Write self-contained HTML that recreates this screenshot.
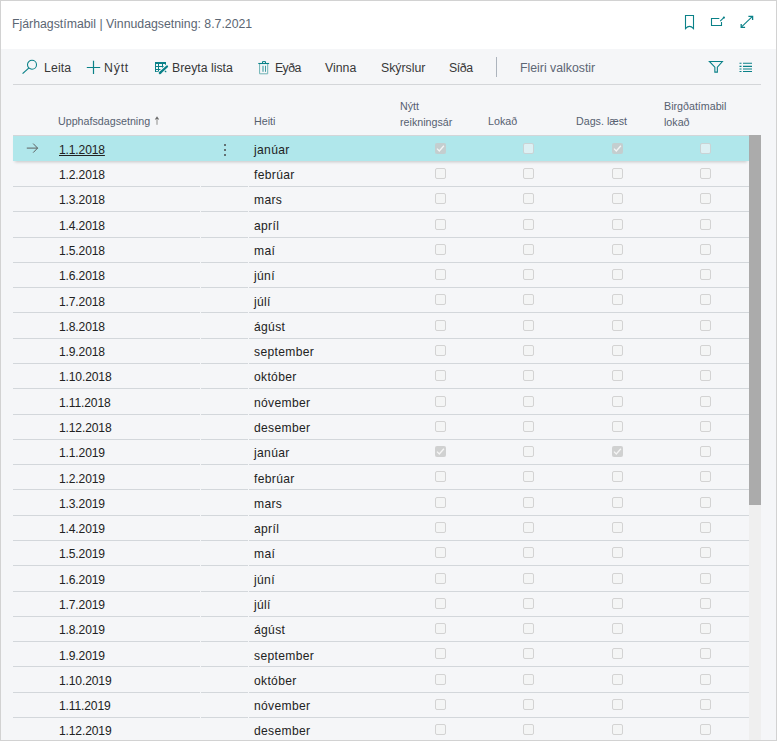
<!DOCTYPE html>
<html><head><meta charset="utf-8"><style>
*{margin:0;padding:0;box-sizing:border-box}
html,body{width:777px;height:741px;overflow:hidden;background:#f5f6f8}
body{position:relative;font-family:"Liberation Sans",sans-serif;}
.frame{position:absolute;left:0;top:0;width:777px;height:741px;border:1px solid #d2d2d2;pointer-events:none;z-index:50}
.hdr{position:absolute;left:0;top:0;width:777px;height:49px;background:#fff}
.title{position:absolute;left:12px;top:16px;font-size:12.3px;color:#5b6673;white-space:nowrap;line-height:16px}
.tb{position:absolute;top:60px;font-size:12.3px;color:#383838;white-space:nowrap;line-height:16px}
.tbline{position:absolute;left:13px;top:84px;width:748px;height:1px;background:#d4d6d9}
.sep{position:absolute;left:496px;top:57px;width:1px;height:20px;background:#adb4bd}
.hd{position:absolute;font-size:10.7px;color:#556070;white-space:nowrap;line-height:15.5px}
.cell{position:absolute;font-size:12.1px;color:#222;white-space:nowrap;line-height:16px}
.ul{text-decoration:underline}
.nm{letter-spacing:0.33px}
.dt{letter-spacing:-0.15px}
.rl{position:absolute;height:1px;background:#d3d7db}
.selrow{position:absolute;left:13px;width:736px;background:#b0e7eb;border-top:1px solid #d3d6d9;box-shadow:0 3px 3px -2px rgba(0,0,0,0.2)}
.cb{position:absolute;width:11px;height:11px;border:1px solid #d3d3d3;border-radius:2px;background:#f4f5f5}
.selcb{background:#ddf0f3;border-color:#c9d3d5}
.chk{background:rgba(200,200,200,0.82);border-color:transparent}
.chk svg{position:absolute;left:-1px;top:-1px}
.dot{position:absolute;width:2px;height:2px;background:#4a4a4a;border-radius:1px}
.sbtrack{position:absolute;left:749px;top:135px;width:12px;height:606px;background:#efefef}
.sbthumb{position:absolute;left:749px;top:135px;width:12px;height:370px;background:#ababab}
</style></head><body>
<div class="hdr"></div>
<div class="title">Fjárhagstímabil | Vinnudagsetning: 8.7.2021</div>
<svg style="position:absolute;left:684px;top:14px" width="11" height="16" viewBox="0 0 11 16"><path d="M1.5 1.5 H9.5 V14.6 Q5.5 10.2 1.5 14.6 Z" stroke="#0a8188" stroke-width="1.1" fill="none"/></svg>
<svg style="position:absolute;left:710px;top:16px" width="16" height="12" viewBox="0 0 16 12"><path d="M9.3 2.5 H1.5 V9.5 H11.5 V5.9" stroke="#0a8188" stroke-width="1.1" fill="none"/><path d="M10.2 5.1 L13.8 1.6" stroke="#0a8188" stroke-width="1.1" fill="none"/><circle cx="13.9" cy="1.6" r="1.1" fill="#0a8188"/></svg>
<svg style="position:absolute;left:739px;top:15px" width="16" height="15" viewBox="0 0 16 15"><path d="M2.6 11.9 L13.2 1.7" stroke="#0a8188" stroke-width="1.1" fill="none"/><path d="M9.4 1.3 H13.6 V5" stroke="#0a8188" stroke-width="1.3" fill="none"/><path d="M2.2 9.1 V12.3 H6.1" stroke="#0a8188" stroke-width="1.3" fill="none"/></svg>

<svg style="position:absolute;left:21px;top:58px" width="18" height="17" viewBox="0 0 18 17"><circle cx="11" cy="6.8" r="4.5" stroke="#0a8188" stroke-width="1.05" fill="none"/><path d="M7.7 10.1 L1.6 15.6" stroke="#0a8188" stroke-width="1.2" fill="none"/></svg>
<div class="tb" style="left:44px;letter-spacing:0.1px">Leita</div>
<svg style="position:absolute;left:86px;top:60px" width="15" height="15" viewBox="0 0 15 15"><path d="M7.5 0.8 V14 M0.8 7.5 H14.2" stroke="#0a8188" stroke-width="1.2" fill="none"/></svg>
<div class="tb" style="left:104px;letter-spacing:0.8px">Nýtt</div>
<svg style="position:absolute;left:152px;top:59px" width="18" height="18" viewBox="0 0 18 18"><rect x="3" y="3" width="11" height="10" fill="#0a8188"/><g fill="#f5f6f8"><rect x="4" y="5" width="2" height="2"/><rect x="7" y="5" width="3" height="2"/><rect x="11" y="5" width="2" height="2"/><rect x="4" y="8" width="2" height="2"/><rect x="7" y="8" width="3" height="2"/><rect x="11" y="8" width="2" height="2"/><rect x="4" y="11" width="2" height="1.2"/><rect x="7" y="11" width="3" height="1.2"/><rect x="11" y="11" width="2" height="1.2"/></g><path d="M7.8 14.1 L15.2 7.2" stroke="#f5f6f8" stroke-width="4.4" fill="none"/><path d="M8.3 13.7 L15 7.5" stroke="#0a8188" stroke-width="2.3" stroke-linecap="round" fill="none"/><path d="M7.2 14.8 L8.8 13.2" stroke="#0a8188" stroke-width="2" fill="none"/><rect x="13" y="12" width="1.3" height="1.2" fill="#0a8188"/></svg>
<div class="tb" style="left:172px">Breyta lista</div>
<svg style="position:absolute;left:254px;top:58px" width="20" height="20" viewBox="0 0 20 20"><path d="M4.3 5.5 H15.1" stroke="#0a8188" stroke-width="1.1" fill="none"/><path d="M8.5 5 V3.6 H11.5 V5" stroke="#0a8188" stroke-width="1" fill="none"/><path d="M5.6 6 V15.8 H13.7 V6" stroke="#6fb3b6" stroke-width="1" fill="none"/><rect x="8" y="7.8" width="2" height="6" fill="#8ec4c7"/><rect x="11" y="7.8" width="1" height="6" fill="#3f9aa0"/></svg>
<div class="tb" style="left:275px;letter-spacing:-0.6px">Eyða</div>
<div class="tb" style="left:325px">Vinna</div>
<div class="tb" style="left:381px">Skýrslur</div>
<div class="tb" style="left:449px;letter-spacing:-0.4px">Síða</div>
<div class="sep"></div>
<div class="tb" style="left:520px;color:#5d6775">Fleiri valkostir</div>
<svg style="position:absolute;left:708px;top:60px" width="16" height="14" viewBox="0 0 16 14"><path d="M1.4 1.5 H14.4 L9.35 7.2 V12.15 H6.85 V7.2 Z" stroke="#0a8188" stroke-width="1.1" fill="none"/></svg>
<svg style="position:absolute;left:739px;top:62px" width="14" height="11" viewBox="0 0 14 11"><path d="M0.5 1.3 H2.5 M4 1.3 H13 M0.5 4.4 H2.5 M4 4.4 H13 M0.5 7 H2.5 M4 7 H13 M0.5 9.5 H2.5 M4 9.5 H13" stroke="#0a8188" stroke-width="1.1" fill="none"/></svg>
<div class="tbline"></div>

<div class="hd" style="left:58px;top:114px">Upphafsdagsetning</div><svg style="position:absolute;left:154px;top:116px" width="6" height="9" viewBox="0 0 6 9"><path d="M0.8 3.6 L3 0.2 L5.2 3.6 Z" fill="#6b6b6b"/><rect x="2" y="3.4" width="2" height="5.4" fill="#c2c2c2"/></svg>
<div class="hd" style="left:254px;top:114px">Heiti</div>
<div class="hd" style="left:400px;top:99px">Nýtt<br>reikningsár</div>
<div class="hd" style="left:488px;top:114px">Lokað</div>
<div class="hd" style="left:576px;top:114px">Dags. læst</div>
<div class="hd" style="left:664px;top:99px">Birgðatímabil<br>lokað</div>

<div class="sbtrack"></div>
<div class="sbthumb"></div>
<div class="selrow" style="top:135px;height:26px"></div><div class="cell dt ul" style="top:142.0px;left:59px">1.1.2018</div><div class="cell nm" style="top:142.0px;left:254px">janúar</div><div class="cb chk" style="top:143px;left:435px"><svg width="11" height="11" viewBox="0 0 11 11"><path d="M2 5.6 L4.3 8 L8.9 2.8" stroke="rgba(255,255,255,0.78)" stroke-width="1.35" fill="none"/></svg></div><div class="cb selcb" style="top:143px;left:523px"></div><div class="cb chk" style="top:143px;left:612px"><svg width="11" height="11" viewBox="0 0 11 11"><path d="M2 5.6 L4.3 8 L8.9 2.8" stroke="rgba(255,255,255,0.78)" stroke-width="1.35" fill="none"/></svg></div><div class="cb selcb" style="top:143px;left:700px"></div><svg class="arrow" style="position:absolute;left:26px;top:143px" width="13" height="10" viewBox="0 0 13 10"><path d="M0.8 5.1 H11.6 M7.2 0.6 L11.6 5.1 L7.2 9.6" stroke="#5a5a5a" stroke-width="0.95" fill="none"/></svg><div class="dot" style="top:143.63px;left:224px"></div><div class="dot" style="top:148.83px;left:224px"></div><div class="dot" style="top:154.03px;left:224px"></div><div class="rl" style="top:186px;left:13px;width:187px"></div><div class="rl" style="top:186px;left:201px;width:47px"></div><div class="rl" style="top:186px;left:249px;width:500px"></div><div class="cell dt" style="top:167.0px;left:59px">1.2.2018</div><div class="cell nm" style="top:167.0px;left:254px">febrúar</div><div class="cb" style="top:168px;left:435px"></div><div class="cb" style="top:168px;left:523px"></div><div class="cb" style="top:168px;left:612px"></div><div class="cb" style="top:168px;left:700px"></div><div class="rl" style="top:211px;left:13px;width:187px"></div><div class="rl" style="top:211px;left:201px;width:47px"></div><div class="rl" style="top:211px;left:249px;width:500px"></div><div class="cell dt" style="top:192.0px;left:59px">1.3.2018</div><div class="cell nm" style="top:192.0px;left:254px">mars</div><div class="cb" style="top:193px;left:435px"></div><div class="cb" style="top:193px;left:523px"></div><div class="cb" style="top:193px;left:612px"></div><div class="cb" style="top:193px;left:700px"></div><div class="rl" style="top:237px;left:13px;width:187px"></div><div class="rl" style="top:237px;left:201px;width:47px"></div><div class="rl" style="top:237px;left:249px;width:500px"></div><div class="cell dt" style="top:218.0px;left:59px">1.4.2018</div><div class="cell nm" style="top:218.0px;left:254px">apríl</div><div class="cb" style="top:219px;left:435px"></div><div class="cb" style="top:219px;left:523px"></div><div class="cb" style="top:219px;left:612px"></div><div class="cb" style="top:219px;left:700px"></div><div class="rl" style="top:262px;left:13px;width:187px"></div><div class="rl" style="top:262px;left:201px;width:47px"></div><div class="rl" style="top:262px;left:249px;width:500px"></div><div class="cell dt" style="top:243.0px;left:59px">1.5.2018</div><div class="cell nm" style="top:243.0px;left:254px">maí</div><div class="cb" style="top:244px;left:435px"></div><div class="cb" style="top:244px;left:523px"></div><div class="cb" style="top:244px;left:612px"></div><div class="cb" style="top:244px;left:700px"></div><div class="rl" style="top:287px;left:13px;width:187px"></div><div class="rl" style="top:287px;left:201px;width:47px"></div><div class="rl" style="top:287px;left:249px;width:500px"></div><div class="cell dt" style="top:268.0px;left:59px">1.6.2018</div><div class="cell nm" style="top:268.0px;left:254px">júní</div><div class="cb" style="top:269px;left:435px"></div><div class="cb" style="top:269px;left:523px"></div><div class="cb" style="top:269px;left:612px"></div><div class="cb" style="top:269px;left:700px"></div><div class="rl" style="top:312px;left:13px;width:187px"></div><div class="rl" style="top:312px;left:201px;width:47px"></div><div class="rl" style="top:312px;left:249px;width:500px"></div><div class="cell dt" style="top:294.0px;left:59px">1.7.2018</div><div class="cell nm" style="top:294.0px;left:254px">júlí</div><div class="cb" style="top:294px;left:435px"></div><div class="cb" style="top:294px;left:523px"></div><div class="cb" style="top:294px;left:612px"></div><div class="cb" style="top:294px;left:700px"></div><div class="rl" style="top:338px;left:13px;width:187px"></div><div class="rl" style="top:338px;left:201px;width:47px"></div><div class="rl" style="top:338px;left:249px;width:500px"></div><div class="cell dt" style="top:319.0px;left:59px">1.8.2018</div><div class="cell nm" style="top:319.0px;left:254px">ágúst</div><div class="cb" style="top:320px;left:435px"></div><div class="cb" style="top:320px;left:523px"></div><div class="cb" style="top:320px;left:612px"></div><div class="cb" style="top:320px;left:700px"></div><div class="rl" style="top:363px;left:13px;width:187px"></div><div class="rl" style="top:363px;left:201px;width:47px"></div><div class="rl" style="top:363px;left:249px;width:500px"></div><div class="cell dt" style="top:344.0px;left:59px">1.9.2018</div><div class="cell nm" style="top:344.0px;left:254px">september</div><div class="cb" style="top:345px;left:435px"></div><div class="cb" style="top:345px;left:523px"></div><div class="cb" style="top:345px;left:612px"></div><div class="cb" style="top:345px;left:700px"></div><div class="rl" style="top:388px;left:13px;width:187px"></div><div class="rl" style="top:388px;left:201px;width:47px"></div><div class="rl" style="top:388px;left:249px;width:500px"></div><div class="cell dt" style="top:369.0px;left:59px">1.10.2018</div><div class="cell nm" style="top:369.0px;left:254px">október</div><div class="cb" style="top:370px;left:435px"></div><div class="cb" style="top:370px;left:523px"></div><div class="cb" style="top:370px;left:612px"></div><div class="cb" style="top:370px;left:700px"></div><div class="rl" style="top:414px;left:13px;width:187px"></div><div class="rl" style="top:414px;left:201px;width:47px"></div><div class="rl" style="top:414px;left:249px;width:500px"></div><div class="cell dt" style="top:395.0px;left:59px">1.11.2018</div><div class="cell nm" style="top:395.0px;left:254px">nóvember</div><div class="cb" style="top:396px;left:435px"></div><div class="cb" style="top:396px;left:523px"></div><div class="cb" style="top:396px;left:612px"></div><div class="cb" style="top:396px;left:700px"></div><div class="rl" style="top:439px;left:13px;width:187px"></div><div class="rl" style="top:439px;left:201px;width:47px"></div><div class="rl" style="top:439px;left:249px;width:500px"></div><div class="cell dt" style="top:420.0px;left:59px">1.12.2018</div><div class="cell nm" style="top:420.0px;left:254px">desember</div><div class="cb" style="top:421px;left:435px"></div><div class="cb" style="top:421px;left:523px"></div><div class="cb" style="top:421px;left:612px"></div><div class="cb" style="top:421px;left:700px"></div><div class="rl" style="top:464px;left:13px;width:187px"></div><div class="rl" style="top:464px;left:201px;width:47px"></div><div class="rl" style="top:464px;left:249px;width:500px"></div><div class="cell dt" style="top:445.0px;left:59px">1.1.2019</div><div class="cell nm" style="top:445.0px;left:254px">janúar</div><div class="cb chk" style="top:446px;left:435px"><svg width="11" height="11" viewBox="0 0 11 11"><path d="M2 5.6 L4.3 8 L8.9 2.8" stroke="rgba(255,255,255,0.78)" stroke-width="1.35" fill="none"/></svg></div><div class="cb" style="top:446px;left:523px"></div><div class="cb chk" style="top:446px;left:612px"><svg width="11" height="11" viewBox="0 0 11 11"><path d="M2 5.6 L4.3 8 L8.9 2.8" stroke="rgba(255,255,255,0.78)" stroke-width="1.35" fill="none"/></svg></div><div class="cb" style="top:446px;left:700px"></div><div class="rl" style="top:489px;left:13px;width:187px"></div><div class="rl" style="top:489px;left:201px;width:47px"></div><div class="rl" style="top:489px;left:249px;width:500px"></div><div class="cell dt" style="top:471.0px;left:59px">1.2.2019</div><div class="cell nm" style="top:471.0px;left:254px">febrúar</div><div class="cb" style="top:471px;left:435px"></div><div class="cb" style="top:471px;left:523px"></div><div class="cb" style="top:471px;left:612px"></div><div class="cb" style="top:471px;left:700px"></div><div class="rl" style="top:515px;left:13px;width:187px"></div><div class="rl" style="top:515px;left:201px;width:47px"></div><div class="rl" style="top:515px;left:249px;width:500px"></div><div class="cell dt" style="top:496.0px;left:59px">1.3.2019</div><div class="cell nm" style="top:496.0px;left:254px">mars</div><div class="cb" style="top:497px;left:435px"></div><div class="cb" style="top:497px;left:523px"></div><div class="cb" style="top:497px;left:612px"></div><div class="cb" style="top:497px;left:700px"></div><div class="rl" style="top:540px;left:13px;width:187px"></div><div class="rl" style="top:540px;left:201px;width:47px"></div><div class="rl" style="top:540px;left:249px;width:500px"></div><div class="cell dt" style="top:521.0px;left:59px">1.4.2019</div><div class="cell nm" style="top:521.0px;left:254px">apríl</div><div class="cb" style="top:522px;left:435px"></div><div class="cb" style="top:522px;left:523px"></div><div class="cb" style="top:522px;left:612px"></div><div class="cb" style="top:522px;left:700px"></div><div class="rl" style="top:565px;left:13px;width:187px"></div><div class="rl" style="top:565px;left:201px;width:47px"></div><div class="rl" style="top:565px;left:249px;width:500px"></div><div class="cell dt" style="top:546.0px;left:59px">1.5.2019</div><div class="cell nm" style="top:546.0px;left:254px">maí</div><div class="cb" style="top:547px;left:435px"></div><div class="cb" style="top:547px;left:523px"></div><div class="cb" style="top:547px;left:612px"></div><div class="cb" style="top:547px;left:700px"></div><div class="rl" style="top:591px;left:13px;width:187px"></div><div class="rl" style="top:591px;left:201px;width:47px"></div><div class="rl" style="top:591px;left:249px;width:500px"></div><div class="cell dt" style="top:572.0px;left:59px">1.6.2019</div><div class="cell nm" style="top:572.0px;left:254px">júní</div><div class="cb" style="top:573px;left:435px"></div><div class="cb" style="top:573px;left:523px"></div><div class="cb" style="top:573px;left:612px"></div><div class="cb" style="top:573px;left:700px"></div><div class="rl" style="top:616px;left:13px;width:187px"></div><div class="rl" style="top:616px;left:201px;width:47px"></div><div class="rl" style="top:616px;left:249px;width:500px"></div><div class="cell dt" style="top:597.0px;left:59px">1.7.2019</div><div class="cell nm" style="top:597.0px;left:254px">júlí</div><div class="cb" style="top:598px;left:435px"></div><div class="cb" style="top:598px;left:523px"></div><div class="cb" style="top:598px;left:612px"></div><div class="cb" style="top:598px;left:700px"></div><div class="rl" style="top:641px;left:13px;width:187px"></div><div class="rl" style="top:641px;left:201px;width:47px"></div><div class="rl" style="top:641px;left:249px;width:500px"></div><div class="cell dt" style="top:622.0px;left:59px">1.8.2019</div><div class="cell nm" style="top:622.0px;left:254px">ágúst</div><div class="cb" style="top:623px;left:435px"></div><div class="cb" style="top:623px;left:523px"></div><div class="cb" style="top:623px;left:612px"></div><div class="cb" style="top:623px;left:700px"></div><div class="rl" style="top:666px;left:13px;width:187px"></div><div class="rl" style="top:666px;left:201px;width:47px"></div><div class="rl" style="top:666px;left:249px;width:500px"></div><div class="cell dt" style="top:648.0px;left:59px">1.9.2019</div><div class="cell nm" style="top:648.0px;left:254px">september</div><div class="cb" style="top:648px;left:435px"></div><div class="cb" style="top:648px;left:523px"></div><div class="cb" style="top:648px;left:612px"></div><div class="cb" style="top:648px;left:700px"></div><div class="rl" style="top:692px;left:13px;width:187px"></div><div class="rl" style="top:692px;left:201px;width:47px"></div><div class="rl" style="top:692px;left:249px;width:500px"></div><div class="cell dt" style="top:673.0px;left:59px">1.10.2019</div><div class="cell nm" style="top:673.0px;left:254px">október</div><div class="cb" style="top:674px;left:435px"></div><div class="cb" style="top:674px;left:523px"></div><div class="cb" style="top:674px;left:612px"></div><div class="cb" style="top:674px;left:700px"></div><div class="rl" style="top:717px;left:13px;width:187px"></div><div class="rl" style="top:717px;left:201px;width:47px"></div><div class="rl" style="top:717px;left:249px;width:500px"></div><div class="cell dt" style="top:698.0px;left:59px">1.11.2019</div><div class="cell nm" style="top:698.0px;left:254px">nóvember</div><div class="cb" style="top:699px;left:435px"></div><div class="cb" style="top:699px;left:523px"></div><div class="cb" style="top:699px;left:612px"></div><div class="cb" style="top:699px;left:700px"></div><div class="rl" style="top:742px;left:13px;width:187px"></div><div class="rl" style="top:742px;left:201px;width:47px"></div><div class="rl" style="top:742px;left:249px;width:500px"></div><div class="cell dt" style="top:723.0px;left:59px">1.12.2019</div><div class="cell nm" style="top:723.0px;left:254px">desember</div><div class="cb" style="top:724px;left:435px"></div><div class="cb" style="top:724px;left:523px"></div><div class="cb" style="top:724px;left:612px"></div><div class="cb" style="top:724px;left:700px"></div>
<div class="frame"></div>
</body></html>
